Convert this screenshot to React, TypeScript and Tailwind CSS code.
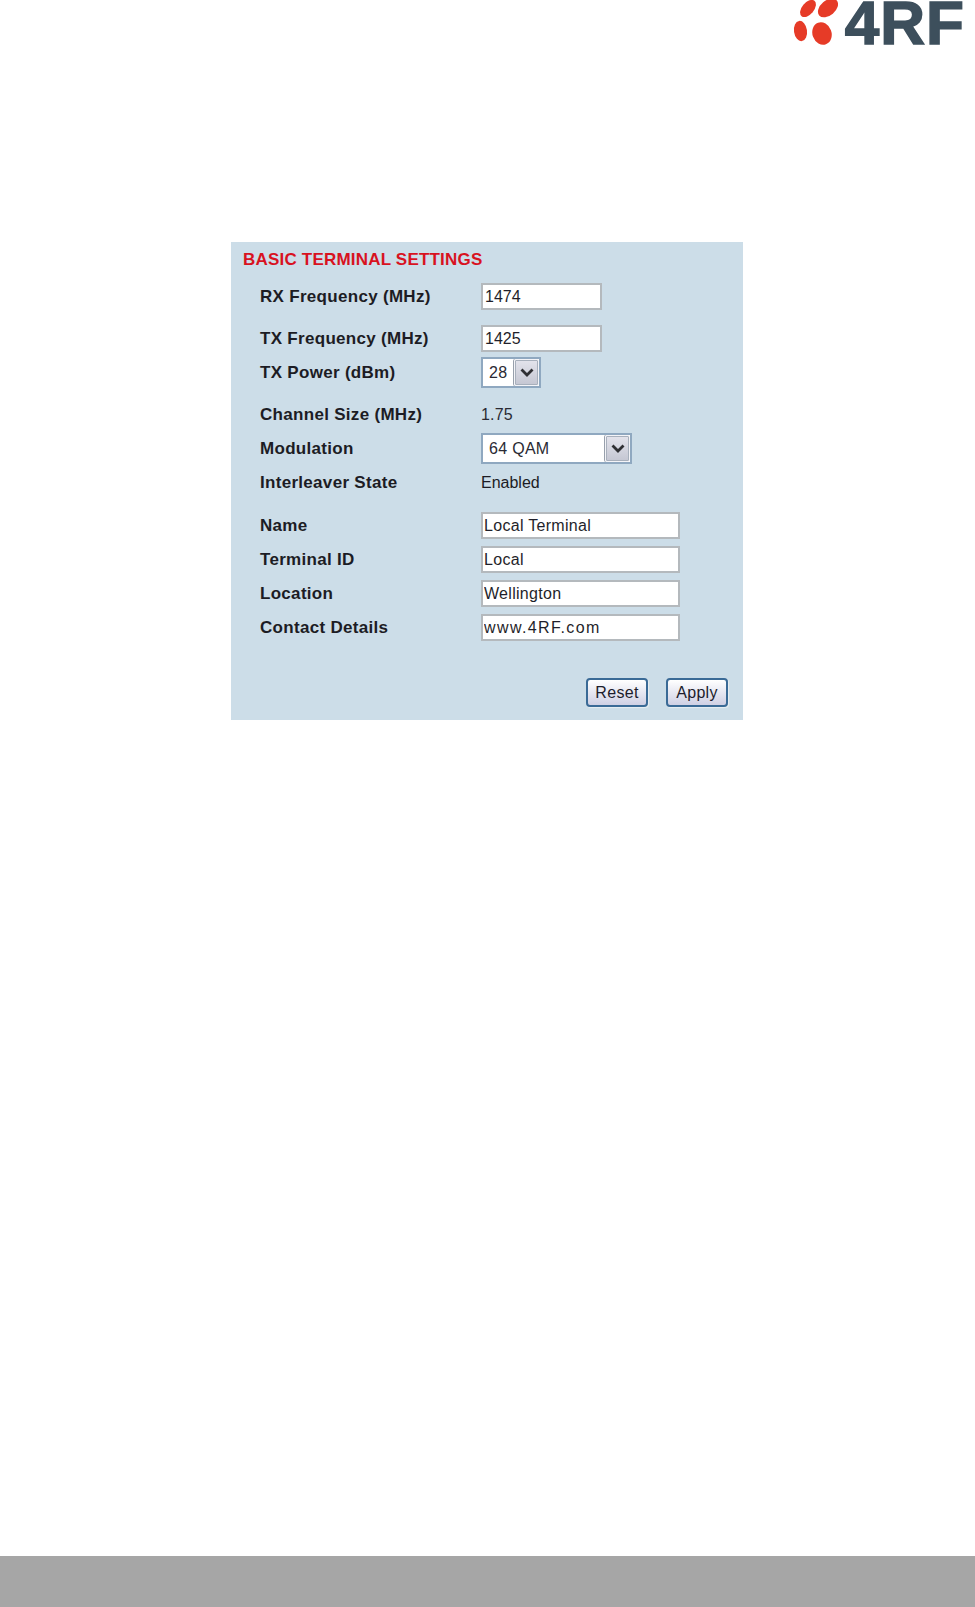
import * as React from "react";

const font = "font-['Liberation_Sans',Arial,sans-serif]";

function Chevron() {
  return (
    <svg viewBox="0 0 14 9" className="w-[14px] h-[9px]" aria-hidden="true">
      <path d="M1.5 1.5 7 7l5.5-5.5" fill="none" stroke="#2f2f33" strokeWidth="2.8" />
    </svg>
  );
}

function Field({ value, wide, spaced }: { value: string; wide?: boolean; spaced?: boolean }) {
  return (
    <input
      readOnly
      value={value}
      className={`h-[27px] ${wide ? "w-[199px] px-[1px]" : "w-[121px] px-[2px]"} ${spaced ? "tracking-[1.4px]" : wide ? "tracking-[0.3px]" : ""} border-2 border-[#b4b9bd] bg-white text-[16px] text-[#1f1f2a] outline-none`}
    />
  );
}

function Select({ value, width }: { value: string; width: string }) {
  return (
    <div className={`flex h-[31px] ${width} items-stretch border-2 border-[#8fa8c0] bg-white`}>
      <span className="flex-1 pl-[6px] text-[16px] leading-[27px] tracking-[0.3px] text-[#2a2a33]">{value}</span>
      <span className="flex w-[25px] items-center justify-center rounded-[2px] border border-[#f4f4f8] bg-gradient-to-b from-[#e4e4ec] to-[#c4c6d2] shadow-[-1px_0_0_#98a0ac,0_0_0_1px_#a8b0bc_inset]">
        <Chevron />
      </span>
    </div>
  );
}

function Row({ label, top, height, children }: { label: string; top: string; height: string; children: React.ReactNode }) {
  return (
    <div className={`grid grid-cols-[221px_1fr] items-center ${top} ${height}`}>
      <span className="text-[17px] font-bold tracking-[0.3px] text-[#1c1c24]">{label}</span>
      <div className="flex items-center">{children}</div>
    </div>
  );
}

function Button({ children }: { children: React.ReactNode }) {
  return (
    <button className="h-[29px] w-[62px] rounded-[4px] border-2 border-[#3a6a96] bg-gradient-to-b from-white to-[#cfd0e4] text-[16px] tracking-[0.3px] text-[#1c1c2c] shadow-[1px_1px_1px_#e8eef2]">
      {children}
    </button>
  );
}

export default function App() {
  return (
    <div className={`flex min-h-[1607px] flex-col bg-white ${font}`}>
      <header className="flex h-[46px] justify-end pr-[10px]">
        <svg viewBox="0 0 62 46" className="mr-[7px] h-[46px] w-[62px]" aria-label="4RF logo">
          <g fill="#e63b27">
            <ellipse cx="32" cy="8.5" rx="6" ry="10" transform="rotate(40 32 8.5)" />
            <ellipse cx="52" cy="8" rx="7.5" ry="11.5" transform="rotate(50 52 8)" />
            <ellipse cx="24.5" cy="31" rx="6.5" ry="10.2" transform="rotate(-8 24.5 31)" />
            <ellipse cx="46" cy="33.5" rx="9.5" ry="11.5" transform="rotate(-20 46 33.5)" />
          </g>
        </svg>
        <span className="text-[62px] font-bold leading-[46px] tracking-[1px] text-[#3d4f5c] [-webkit-text-stroke:1.5px_#3d4f5c]">4RF</span>
      </header>

      <main className="mt-[196px] ml-[231px] h-[478px] w-[512px] bg-[#ccdde8] pl-[29px] pr-[15px]">
        <h1 className="-ml-[17px] pt-[8px] text-[17px] leading-[20px] font-bold tracking-[0.2px] text-[#d8121f]">BASIC TERMINAL SETTINGS</h1>

        <Row label="RX Frequency (MHz)" top="mt-[13px]" height="h-[27px]">
          <Field value="1474" />
        </Row>
        <Row label="TX Frequency (MHz)" top="mt-[15px]" height="h-[27px]">
          <Field value="1425" />
        </Row>
        <Row label="TX Power (dBm)" top="mt-[5px]" height="h-[31px]">
          <Select value="28" width="w-[60px]" />
        </Row>
        <Row label="Channel Size (MHz)" top="mt-[13px]" height="h-[28px]">
          <span className="text-[16px] tracking-[0.2px] text-[#2a2a33]">1.75</span>
        </Row>
        <Row label="Modulation" top="mt-[4px]" height="h-[31px]">
          <Select value="64 QAM" width="w-[151px]" />
        </Row>
        <Row label="Interleaver State" top="mt-[5px]" height="h-[28px]">
          <span className="text-[16px] text-[#1c1c24]">Enabled</span>
        </Row>
        <Row label="Name" top="mt-[15px]" height="h-[27px]">
          <Field wide value="Local Terminal" />
        </Row>
        <Row label="Terminal ID" top="mt-[7px]" height="h-[27px]">
          <Field wide value="Local" />
        </Row>
        <Row label="Location" top="mt-[7px]" height="h-[27px]">
          <Field wide value="Wellington" />
        </Row>
        <Row label="Contact Details" top="mt-[7px]" height="h-[27px]">
          <Field wide spaced value="www.4RF.com" />
        </Row>

        <div className="mt-[37px] flex justify-end gap-[18px]">
          <Button>Reset</Button>
          <Button>Apply</Button>
        </div>
      </main>

      <footer className="mt-auto h-[51px] bg-[#a6a6a6]" />
    </div>
  );
}
